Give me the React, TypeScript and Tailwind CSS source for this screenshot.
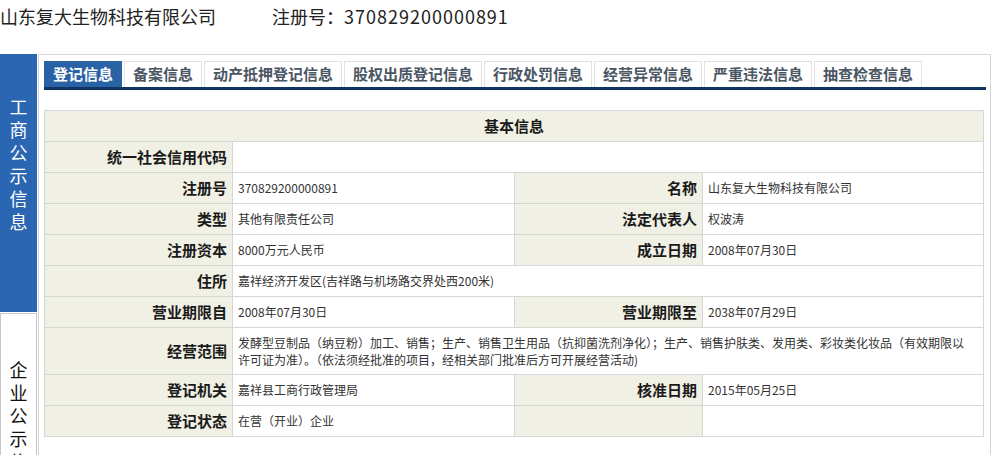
import React from 'react';

const FONT = '"Noto Sans CJK SC", "Liberation Sans", sans-serif';

const tabs = ['登记信息', '备案信息', '动产抵押登记信息', '股权出质登记信息', '行政处罚信息', '经营异常信息', '严重违法信息', '抽查检查信息'];

type Row = { l1: string; v1: string; l2?: string; v2?: string; span?: boolean; tall?: boolean };

const rows: Row[] = [
  { l1: '统一社会信用代码', v1: '', span: true },
  { l1: '注册号', v1: '370829200000891', l2: '名称', v2: '山东复大生物科技有限公司' },
  { l1: '类型', v1: '其他有限责任公司', l2: '法定代表人', v2: '权波涛' },
  { l1: '注册资本', v1: '8000万元人民币', l2: '成立日期', v2: '2008年07月30日' },
  { l1: '住所', v1: '嘉祥经济开发区(吉祥路与机场路交界处西200米)', span: true },
  { l1: '营业期限自', v1: '2008年07月30日', l2: '营业期限至', v2: '2038年07月29日' },
  {
    l1: '经营范围',
    v1: '发酵型豆制品（纳豆粉）加工、销售；生产、销售卫生用品（抗抑菌洗剂净化）；生产、销售护肤类、发用类、彩妆类化妆品（有效期限以许可证为准）。（依法须经批准的项目，经相关部门批准后方可开展经营活动)',
    span: true,
    tall: true,
  },
  { l1: '登记机关', v1: '嘉祥县工商行政管理局', l2: '核准日期', v2: '2015年05月25日' },
  { l1: '登记状态', v1: '在营（开业）企业', l2: '', v2: '' },
];

function Label({ text }: { text: string }) {
  return (
    <td className="border border-[#d6d6d6] bg-[#f0f0e4] pr-[5px] text-right align-middle text-[15px] font-bold text-[#1a1a1a]">
      {text}
    </td>
  );
}

function Value({ text, span, tall }: { text: string; span?: boolean; tall?: boolean }) {
  return (
    <td
      colSpan={span ? 3 : 1}
      className={`border border-[#d6d6d6] bg-white pl-[5px] align-middle text-[12px] text-[#333] ${tall ? 'pr-[12px] leading-[17px]' : 'pr-[5px]'}`}
    >
      {text}
    </td>
  );
}

export default function App() {
  return (
    <div className="w-[991px] h-[455px] overflow-hidden bg-white" style={{ fontFamily: FONT }}>
      {/* Title line */}
      <div className="flex h-[54px] items-start pt-[3px] text-[18px] leading-[26px] text-[#222]">
        <span>山东复大生物科技有限公司</span>
        <span className="ml-[56px]">
          注册号：<span className="tracking-[1px]">370829200000891</span>
        </span>
      </div>

      <div className="flex">
        {/* Side nav */}
        <div className="flex w-[37px] flex-col">
          <div className="flex h-[258px] flex-col items-center bg-[#2a66b1] pt-[41px] text-[18px] leading-[23px] text-white">
            {'工商公示信息'.split('').map((c) => (
              <span key={c} className="block h-[23px] leading-[23px]">{c}</span>
            ))}
          </div>
          <div className="mt-[1px] flex h-[200px] flex-col items-center border border-[#c8c8c8] bg-white pt-[44px] text-[18px] leading-[23px] text-[#111]">
            {'企业公示信息'.split('').map((c) => (
              <span key={c} className="block h-[23px] leading-[23px]">{c}</span>
            ))}
          </div>
        </div>

        {/* Main panel */}
        <div className="ml-[1px] h-[410px] flex-1 border border-b-0 border-[#d6d6d6] pl-[5px] pr-[4px] pt-[6px]">
          <div className="flex gap-[2px] border-b-[3px] border-[#0e3461]">
            {tabs.map((t, i) => (
              <div
                key={t}
                className={
                  i === 0
                    ? 'h-[26px] border border-b-0 border-[#2a62a6] bg-[#2a62a6] px-[8px] text-[15px] font-bold leading-[24px] text-white'
                    : 'h-[26px] border border-b-0 border-[#e2e2e2] bg-white px-[8px] text-[15px] font-bold leading-[24px] text-[#4a5664]'
                }
              >
                {t}
              </div>
            ))}
          </div>

          <table className="mt-[20px] w-[939px] table-fixed border-collapse">
            <colgroup>
              <col className="w-[188px]" />
              <col className="w-[282px]" />
              <col className="w-[188px]" />
              <col className="w-[281px]" />
            </colgroup>
            <tbody>
              <tr className="h-[31px]">
                <th colSpan={4} className="border border-[#d6d6d6] bg-[#f0f0e4] text-center align-middle text-[15px] font-bold text-[#1a1a1a]">
                  基本信息
                </th>
              </tr>
              {rows.map((r) => (
                <tr key={r.l1} className={r.tall ? 'h-[47px]' : 'h-[31px]'}>
                  <Label text={r.l1} />
                  <Value text={r.v1} span={r.span} tall={r.tall} />
                  {!r.span && (
                    <>
                      <Label text={r.l2 ?? ''} />
                      <Value text={r.v2 ?? ''} />
                    </>
                  )}
                </tr>
              ))}
            </tbody>
          </table>
        </div>
      </div>
    </div>
  );
}
